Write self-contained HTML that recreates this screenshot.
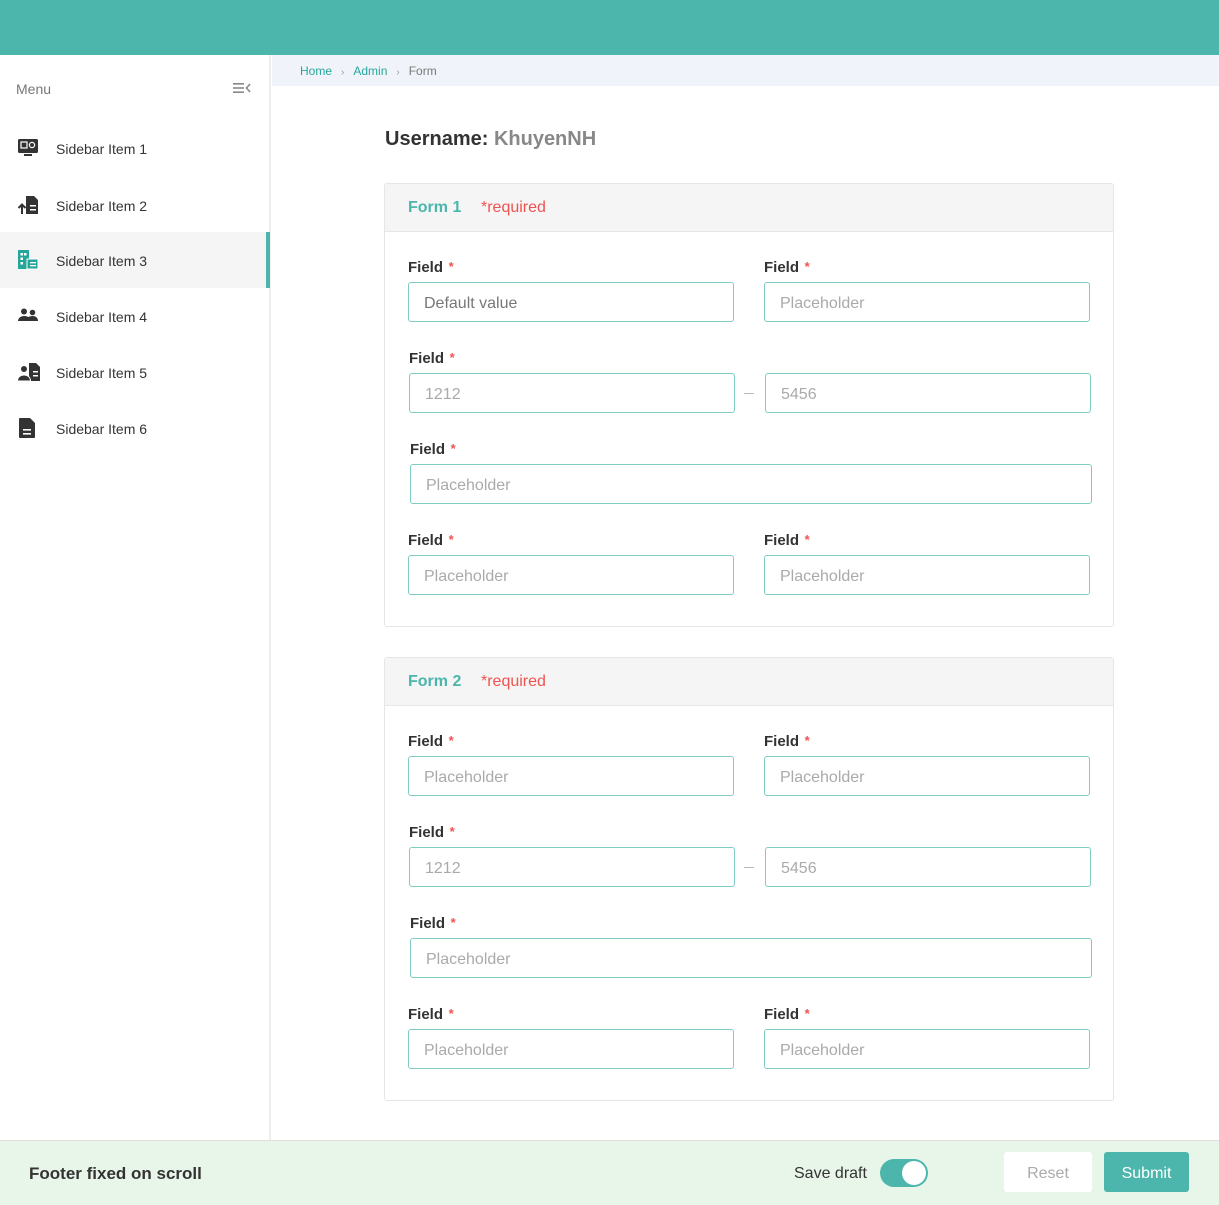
<!DOCTYPE html>
<html><head><meta charset="utf-8"><style>
*{box-sizing:border-box;margin:0;padding:0}
body{width:1219px;height:1205px;position:relative;overflow:hidden;background:#fff;font-family:"Liberation Sans",sans-serif;color:#333}
.a{position:absolute}
.top{left:0;top:0;width:1219px;height:55px;background:#4db6ac}
.side{left:0;top:55px;width:271px;height:1085px;border-right:2px solid #eee;background:#fff}
.menu{left:16px;top:81px;font-size:14px;color:#777}
.item{left:0;width:270px;height:56px;display:flex;align-items:center}
.item span{position:absolute;left:56px;top:21px;font-size:14px;color:#333}
.item svg{position:absolute;left:17px}
.bc{left:272px;top:55px;width:947px;height:31px;background:#f0f4fa;font-size:12px;line-height:33px;padding-left:28px;color:#777}
.bc b{font-weight:normal;color:#26a69a}
.bc i{font-style:normal;color:#999;margin:0 9px;font-size:10px}
.user{left:385px;top:128px;font-size:20px;font-weight:bold;color:#333}
.user span{color:#888}
.card{left:384px;width:730px;height:444px;border:1px solid #e6e6e6;border-radius:3px;background:#fff}
.hd{position:absolute;left:0;top:0;width:100%;height:48px;background:#f5f5f5;border-bottom:1px solid #e6e6e6}
.ft{position:absolute;left:23px;top:15px;font-size:16px;font-weight:bold;color:#4db6ac}
.rq{position:absolute;left:96px;top:15px;font-size:16px;color:#ef5350}
.lb{position:absolute;font-size:15px;font-weight:bold;color:#333;margin-top:1px}
.lb:after{content:" *";color:#ef5350;font-size:13px;vertical-align:top;margin-left:2px}
.in{position:absolute;height:40px;border:1px solid #80cbc4;border-radius:3px;font-size:16px;color:#aaa;padding-left:15px;line-height:42px}
.in.d{color:#777}
.dash{position:absolute;width:10px;height:1px;background:#bbb}
.foot{left:0;top:1140px;width:1219px;height:65px;background:#e8f5e9;border-top:1px solid #e0e0e0}
</style></head><body>
<div class="a top"></div>
<div class="a side"></div>
<div class="a menu">Menu</div>
<svg class="a" style="left:232px;top:81px" width="20" height="14" viewBox="0 0 20 14"><g fill="#888"><rect x="1" y="2" width="11" height="1.6"/><rect x="1" y="6.2" width="11" height="1.6"/><rect x="1" y="10.4" width="11" height="1.6"/></g><path d="M18 3 L14.5 7 L18 11" stroke="#888" stroke-width="1.6" fill="none"/></svg>

<div class="a item" style="top:120px"><svg width="22" height="20" viewBox="0 0 22 20"><rect x="1" y="1" width="20" height="14" rx="1.5" fill="#333"/><rect x="4" y="4" width="6" height="6" fill="none" stroke="#fff" stroke-width="1.2"/><circle cx="15" cy="7" r="2.6" fill="none" stroke="#fff" stroke-width="1.2"/><rect x="7" y="16" width="8" height="2" fill="#333"/></svg><span>Sidebar Item 1</span></div>
<div class="a item" style="top:177px"><svg width="22" height="22" viewBox="0 0 22 22"><path d="M9 2h8l4 4v14H9z" fill="#333"/><rect x="13" y="11" width="6" height="1.5" fill="#fff"/><rect x="13" y="15" width="6" height="1.5" fill="#fff"/><path d="M5 20V11M1.5 14L5 10.5 8.5 14" stroke="#333" stroke-width="2" fill="none"/></svg><span>Sidebar Item 2</span></div>
<div class="a" style="left:0;top:232px;width:270px;height:56px;background:#f5f5f5"></div>
<div class="a" style="left:266px;top:232px;width:4px;height:56px;background:#4db6ac"></div>
<div class="a item" style="top:232px"><svg width="22" height="22" viewBox="0 0 22 22"><rect x="1" y="1" width="11" height="19" fill="#26a69a"/><rect x="10" y="10" width="11" height="10" fill="#26a69a" stroke="#fff" stroke-width="1"/><g fill="#fff"><rect x="3.5" y="4" width="2.5" height="2.5"/><rect x="7" y="4" width="2.5" height="2.5"/><rect x="3.5" y="8.5" width="2.5" height="2.5"/><rect x="3.5" y="13" width="2.5" height="2.5"/><rect x="13" y="13" width="6" height="1.3"/><rect x="13" y="16" width="6" height="1.3"/></g></svg><span>Sidebar Item 3</span></div>
<div class="a item" style="top:288px"><svg width="22" height="18" viewBox="0 0 22 18"><circle cx="7" cy="4.5" r="3" fill="#333"/><circle cx="15.5" cy="5.5" r="2.8" fill="#333"/><path d="M1 14c0-3 3-5 6-5s5 1 6 3v2z" fill="#333"/><path d="M9 14c0-3 3-5 6.5-5S21 11 21 14z" fill="#333"/></svg><span>Sidebar Item 4</span></div>
<div class="a item" style="top:344px"><svg width="24" height="22" viewBox="0 0 24 22"><path d="M12 2h7l4 4v14H12z" fill="#333"/><rect x="16" y="10" width="5" height="1.5" fill="#fff"/><rect x="16" y="14" width="5" height="1.5" fill="#fff"/><circle cx="7" cy="8" r="3.5" fill="#333" stroke="#fff" stroke-width="1"/><path d="M0.5 20c0-4 3-6 6.5-6s6.5 2 6.5 6z" fill="#333" stroke="#fff" stroke-width="1"/></svg><span>Sidebar Item 5</span></div>
<div class="a item" style="top:400px"><svg width="22" height="22" viewBox="0 0 22 22"><path d="M3 1h10l5 5v14a1 1 0 0 1-1 1H3a1 1 0 0 1-1-1V2a1 1 0 0 1 1-1z" fill="#333"/><rect x="6" y="12" width="8" height="1.6" fill="#fff"/><rect x="6" y="16" width="8" height="1.6" fill="#fff"/></svg><span>Sidebar Item 6</span></div>

<div class="a bc"><b>Home</b><i>›</i><b>Admin</b><i>›</i>Form</div>
<div class="a user">Username: <span>KhuyenNH</span></div>

<div class="a card" style="top:183px">
<div class="hd"><div class="ft">Form 1</div><div class="rq">*required</div></div>
<div class="lb" style="left:23px;top:74px">Field</div><div class="lb" style="left:379px;top:74px">Field</div>
<div class="in d" style="left:23px;top:98px;width:326px">Default value</div><div class="in" style="left:379px;top:98px;width:326px">Placeholder</div>
<div class="lb" style="left:24px;top:165px">Field</div>
<div class="in" style="left:24px;top:189px;width:326px">1212</div><div class="dash" style="left:359px;top:209px"></div><div class="in" style="left:380px;top:189px;width:326px">5456</div>
<div class="lb" style="left:25px;top:256px">Field</div>
<div class="in" style="left:25px;top:280px;width:682px">Placeholder</div>
<div class="lb" style="left:23px;top:347px">Field</div><div class="lb" style="left:379px;top:347px">Field</div>
<div class="in" style="left:23px;top:371px;width:326px">Placeholder</div><div class="in" style="left:379px;top:371px;width:326px">Placeholder</div>
</div>

<div class="a card" style="top:657px">
<div class="hd"><div class="ft">Form 2</div><div class="rq">*required</div></div>
<div class="lb" style="left:23px;top:74px">Field</div><div class="lb" style="left:379px;top:74px">Field</div>
<div class="in" style="left:23px;top:98px;width:326px">Placeholder</div><div class="in" style="left:379px;top:98px;width:326px">Placeholder</div>
<div class="lb" style="left:24px;top:165px">Field</div>
<div class="in" style="left:24px;top:189px;width:326px">1212</div><div class="dash" style="left:359px;top:209px"></div><div class="in" style="left:380px;top:189px;width:326px">5456</div>
<div class="lb" style="left:25px;top:256px">Field</div>
<div class="in" style="left:25px;top:280px;width:682px">Placeholder</div>
<div class="lb" style="left:23px;top:347px">Field</div><div class="lb" style="left:379px;top:347px">Field</div>
<div class="in" style="left:23px;top:371px;width:326px">Placeholder</div><div class="in" style="left:379px;top:371px;width:326px">Placeholder</div>
</div>

<div class="a foot"></div>
<div class="a" style="left:29px;top:1164px;font-size:17px;font-weight:bold;color:#333">Footer fixed on scroll</div>
<div class="a" style="left:794px;top:1165px;font-size:16px;color:#333">Save draft</div>
<div class="a" style="left:880px;top:1159px;width:48px;height:28px;border-radius:14px;background:#4db6ac"></div>
<div class="a" style="left:902px;top:1161px;width:24px;height:24px;border-radius:12px;background:#fff"></div>
<div class="a" style="left:1004px;top:1152px;width:88px;height:40px;background:#fff;border-radius:3px;color:#aaa;font-size:16px;text-align:center;line-height:43px">Reset</div>
<div class="a" style="left:1104px;top:1152px;width:85px;height:40px;background:#4db6ac;border-radius:3px;color:#fff;font-size:16px;text-align:center;line-height:43px">Submit</div>
</body></html>
